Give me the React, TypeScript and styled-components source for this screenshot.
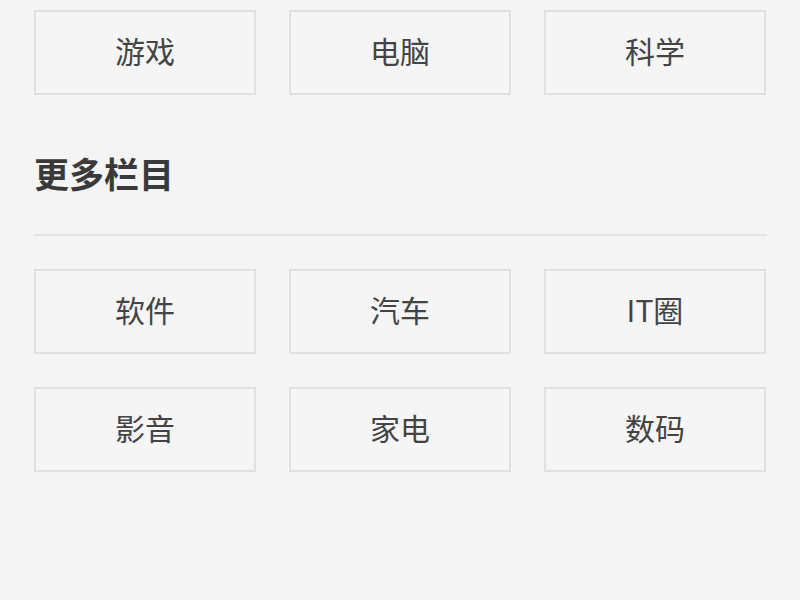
import styled, { createGlobalStyle } from 'styled-components';

const GlobalStyle = createGlobalStyle`
  html, body {
    margin: 0;
    padding: 0;
    background: #f4f4f4;
  }
  body {
    font-family: "Noto Sans CJK SC", "Noto Sans", sans-serif;
    color: #444;
  }
`;

const Page = styled.div`
  padding: 10px 33px 0 34px;
`;

const Grid = styled.div<{ $top?: number }>`
  display: grid;
  grid-template-columns: repeat(3, 222px);
  column-gap: 33px;
  row-gap: 33px;
  margin-top: ${(p) => p.$top ?? 0}px;
`;

const Tile = styled.a`
  box-sizing: border-box;
  height: 85px;
  padding-bottom: 5px;
  display: flex;
  align-items: center;
  justify-content: center;
  border: 2px solid #e0e0e0;
  background: #f5f5f5;
  color: #444;
  font-size: 30px;
  text-decoration: none;
`;

const Heading = styled.h2`
  margin: 61px 0 0;
  padding-bottom: 44px;
  border-bottom: 2px solid #e4e4e4;
  font-size: 35px;
  line-height: 34px;
  font-weight: 700;
  color: #3a3a3a;
`;

const top = ['游戏', '电脑', '科学'];
const more = ['软件', '汽车', 'IT圈', '影音', '家电', '数码'];

const App = () => (
  <>
    <GlobalStyle />
    <Page>
      <Grid>
        {top.map((t) => (
          <Tile key={t}>{t}</Tile>
        ))}
      </Grid>
      <Heading>更多栏目</Heading>
      <Grid $top={33}>
        {more.map((t) => (
          <Tile key={t}>{t}</Tile>
        ))}
      </Grid>
    </Page>
  </>
);

export default App;
